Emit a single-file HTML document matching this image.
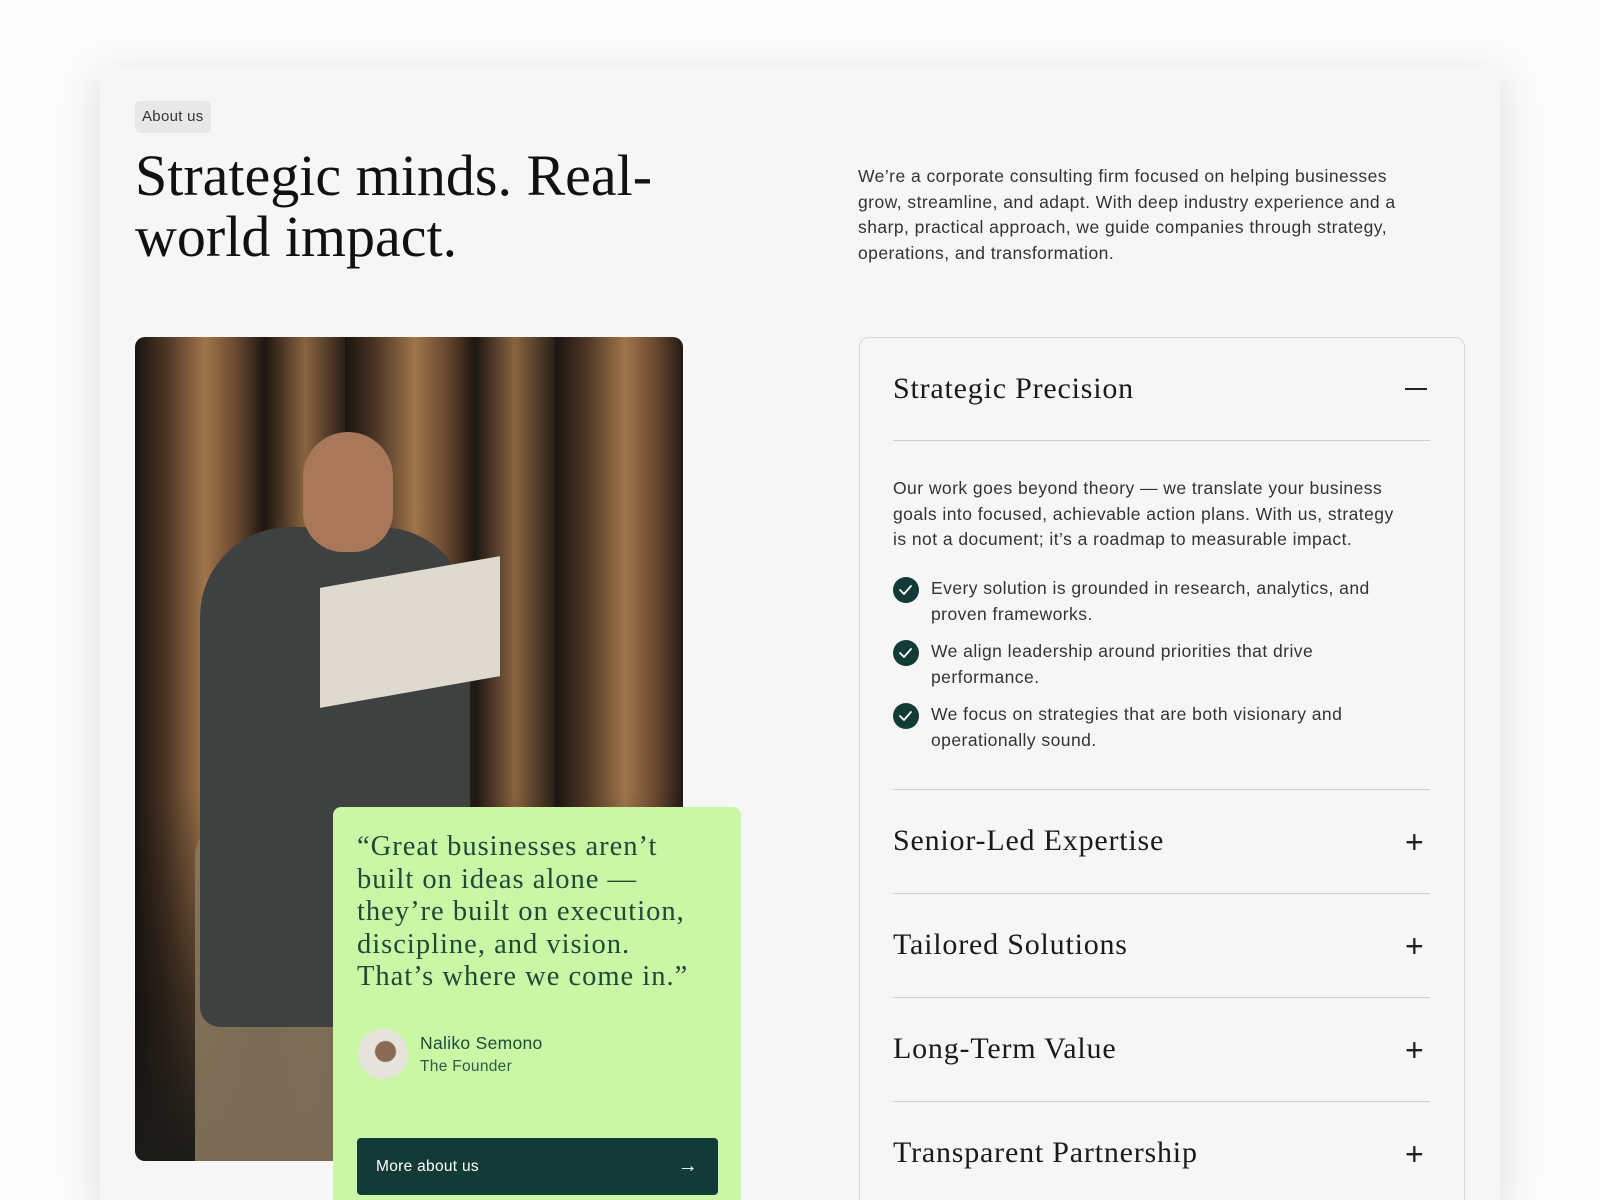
<!DOCTYPE html>
<html><head><meta charset="utf-8"><style>
*{margin:0;padding:0;box-sizing:border-box}
html,body{width:1600px;height:1200px;overflow:hidden}
body{background:#fbfbfb;position:relative;font-family:"Liberation Sans",sans-serif;color:#222}
.card{position:absolute;left:100px;top:67px;width:1400px;height:1133px;background:#f6f6f6;box-shadow:0 10px 40px rgba(0,0,0,.12)}
.a{position:absolute}
.badge{left:135px;top:101px;height:32px;padding:0 7px;background:#e8e8e8;border-radius:5px;font-size:15px;line-height:32px;color:#333;letter-spacing:0.3px}
h1{position:absolute;left:135px;top:145px;font-family:"Liberation Serif",serif;font-weight:400;font-size:58px;line-height:61px;color:#111}
.intro{left:858px;top:164px;width:600px;font-size:17.5px;line-height:25.5px;color:#333;white-space:nowrap;letter-spacing:0.45px}
.photo{left:135px;top:337px;width:548px;height:824px;border-radius:10px;overflow:hidden;
background:linear-gradient(180deg,rgba(0,0,0,0) 0,rgba(0,0,0,0) 55%,rgba(20,18,15,.6) 80%,#1a1a18 100%),
repeating-linear-gradient(90deg,#1a1410 0,#4a3424 30px,#a0754a 70px,#6b4a30 100px,#1d1611 130px,#8a6440 170px,#2a1f17 210px);}
.quote{left:333px;top:807px;width:408px;height:393px;background:#c9f7a5;border-radius:8px 8px 0 0}
.qt{left:357px;top:831px;width:400px;font-family:"Liberation Serif",serif;font-size:28.5px;line-height:32.5px;color:#1f4a38;white-space:nowrap;letter-spacing:1px}
.btn{left:357px;top:1138px;width:361px;height:57px;background:#123a36;border-radius:4px;color:#fff;font-size:15.5px;line-height:57px;padding-left:19px;letter-spacing:0.3px}
.acc{left:859px;top:337px;width:606px;height:900px;border:1px solid #d8d8d8;border-radius:10px}
.t{left:893px;font-family:"Liberation Serif",serif;font-size:30px;color:#1a1a1a;letter-spacing:0.8px}
.ln{left:893px;width:537px;height:1px;background:#cfcfcf}
.pl{left:1405px;font-size:32px;font-weight:300;color:#222;line-height:1}
.body{left:893px;font-size:17.5px;line-height:25.5px;color:#333;white-space:nowrap;letter-spacing:0.45px}
.chk{left:893px;width:26px;height:26px;border-radius:50%;background:#123a36}
.clip{position:absolute;left:0;top:0;width:1600px;height:1200px;overflow:hidden}
</style></head><body>
<div class="clip">
<div class="card"></div>
<div class="a badge">About us</div>
<h1>Strategic minds. Real-<br>world impact.</h1>
<div class="a intro">We’re a corporate consulting firm focused on helping businesses<br>grow, streamline, and adapt. With deep industry experience and a<br>sharp, practical approach, we guide companies through strategy,<br>operations, and transformation.</div>
<div class="a photo">
 <div class="a" style="left:60px;top:480px;width:360px;height:400px;background:#8b7a60;border-radius:40px 40px 0 0;opacity:.85"></div>
 <div class="a" style="left:65px;top:190px;width:270px;height:500px;background:#3f4040;border-radius:90px 90px 20px 20px"></div>
 <div class="a" style="left:168px;top:95px;width:90px;height:120px;background:#a9775a;border-radius:45px 45px 40px 40px"></div>
 <div class="a" style="left:185px;top:235px;width:180px;height:120px;background:#dedad0;transform:skewY(-10deg)"></div>
</div>
<div class="a quote"></div>
<div class="a qt">“Great businesses aren’t<br>built on ideas alone —<br>they’re built on execution,<br>discipline, and vision.<br>That’s where we come in.”</div>
<div class="a" style="left:358px;top:1029px;width:50px;height:50px;border-radius:50%;background:radial-gradient(circle at 55% 45%,#8a6a55 0 10px,#e6e3dc 11px)"></div>
<div class="a" style="left:420px;top:1033px;font-size:17.5px;color:#1f4a38;letter-spacing:0.3px">Naliko Semono</div>
<div class="a" style="left:420px;top:1058px;font-size:15.5px;color:#2f5a45;letter-spacing:0.3px">The Founder</div>
<div class="a btn">More about us<span style="position:absolute;right:20px;top:0;font-size:20px">→</span></div>
<div class="a acc"></div>
<div class="a t" style="top:372px">Strategic Precision</div>
<div class="a" style="left:1405px;top:388px;width:22px;height:2px;background:#222"></div>
<div class="a ln" style="top:440px"></div>
<div class="a body" style="top:476px">Our work goes beyond theory — we translate your business<br>goals into focused, achievable action plans. With us, strategy<br>is not a document; it’s a roadmap to measurable impact.</div>
<div class="a chk" style="top:577px"></div><div class="a body" style="left:931px;top:576px">Every solution is grounded in research, analytics, and<br>proven frameworks.</div>
<div class="a chk" style="top:640px"></div><div class="a body" style="left:931px;top:639px">We align leadership around priorities that drive<br>performance.</div>
<div class="a chk" style="top:703px"></div><div class="a body" style="left:931px;top:702px">We focus on strategies that are both visionary and<br>operationally sound.</div>
<div class="a ln" style="top:789px"></div>
<div class="a t" style="top:824px">Senior-Led Expertise</div><div class="a pl" style="top:826px">+</div>
<div class="a ln" style="top:893px"></div>
<div class="a t" style="top:928px">Tailored Solutions</div><div class="a pl" style="top:930px">+</div>
<div class="a ln" style="top:997px"></div>
<div class="a t" style="top:1032px">Long-Term Value</div><div class="a pl" style="top:1034px">+</div>
<div class="a ln" style="top:1101px"></div>
<div class="a t" style="top:1136px">Transparent Partnership</div><div class="a pl" style="top:1138px">+</div>
<svg class="a" style="left:0;top:0" width="1600" height="1200">
<g fill="none" stroke="#fff" stroke-width="1.8" stroke-linecap="round" stroke-linejoin="round">
<path d="M900 590l4 4 7-8"/><path d="M900 653l4 4 7-8"/><path d="M900 716l4 4 7-8"/></g></svg>
</div>
</body></html>
